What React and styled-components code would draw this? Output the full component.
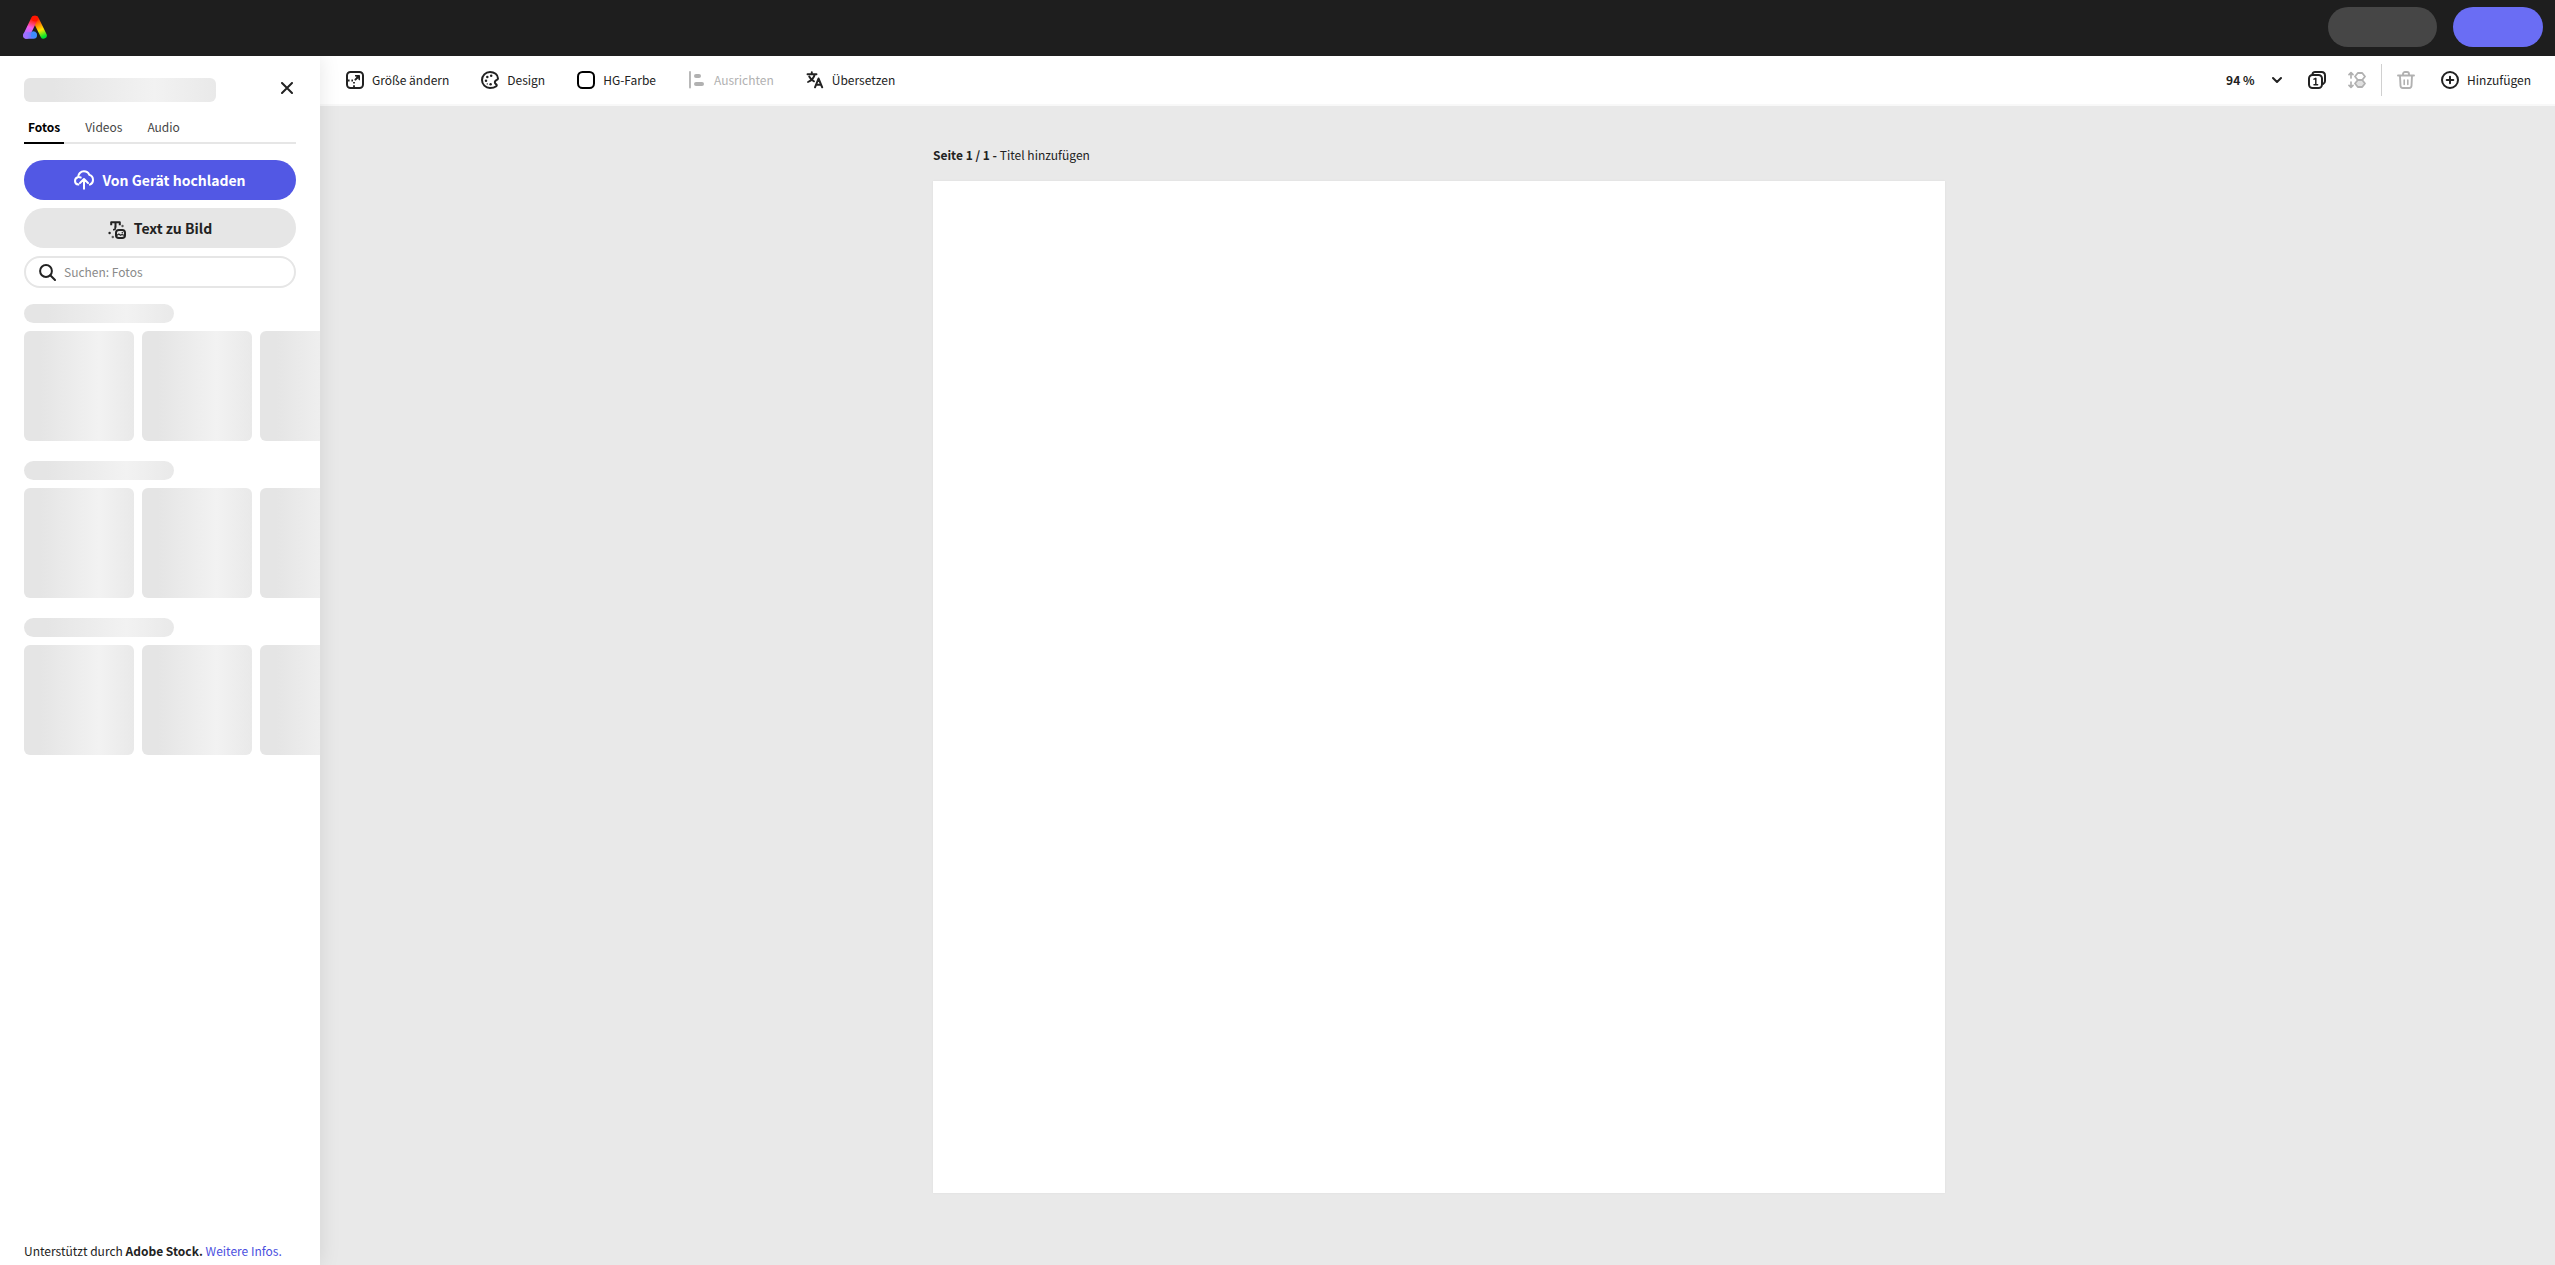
import React, { useState } from "react";
import styled, { createGlobalStyle } from "styled-components";

const GlobalStyle = createGlobalStyle`
  *, *::before, *::after { box-sizing: border-box; }
  body {
    margin: 0;
    background: #e9e9e9;
    color: #222;
    font-family: "Noto Sans CJK SC", "Noto Sans", sans-serif;
    font-size: 12px;
    line-height: 20px;
  }
  button, input, select { font: inherit; color: inherit; }
`;

const Shell = styled.div`
  min-height: 100vh;
  display: flex;
  flex-direction: column;
`;

const Header = styled.header`
  height: 56px;
  flex: none;
  display: flex;
  align-items: center;
  justify-content: space-between;
  padding: 0 12px 2px 23px;
  background: #1e1e1e;
`;

const HeaderActions = styled.div`
  display: flex;
  gap: 16px;
`;

const HeaderPill = styled.button`
  width: ${(p) => (p.$primary ? 90 : 109)}px;
  height: 40px;
  padding: 0;
  border: 0;
  border-radius: 20px;
  background: ${(p) => (p.$primary ? "#6a6df4" : "#464646")};
`;

const Body = styled.div`
  flex: 1;
  display: flex;
`;

const Sidebar = styled.aside`
  position: relative;
  z-index: 1;
  width: 320px;
  flex: none;
  display: flex;
  flex-direction: column;
  padding: 20px 24px 4px;
  background: #fff;
  box-shadow: 0 0 20px rgba(0, 0, 0, 0.1);
  clip-path: inset(0 -24px 0 0);
`;

const PanelHead = styled.div`
  display: flex;
  align-items: center;
  justify-content: space-between;
  height: 28px;
`;

const Skeleton = styled.div`
  flex: none;
  width: ${(p) => p.$w}px;
  height: ${(p) => p.$h}px;
  border-radius: ${(p) => p.$r}px;
  background: linear-gradient(90deg, #e5e5e5 15%, #f2f2f2 68%, #e9e9e9);
`;

const IconButton = styled.button`
  display: flex;
  padding: 0;
  border: 0;
  background: none;
  color: ${(p) => (p.disabled ? "#b1b1b1" : "#222")};
`;

const CloseButton = styled(IconButton)`
  padding: 2px 3px 6px;
`;

const Tabs = styled.div`
  display: flex;
  gap: 17px;
  margin-top: 8px;
  border-bottom: 2px solid #e6e6e6;
`;

const Tab = styled.button`
  height: 32px;
  margin-bottom: -2px;
  padding: 0 4px;
  border: 0;
  border-bottom: 2px solid ${(p) => (p.$active ? "#000" : "transparent")};
  background: none;
  color: ${(p) => (p.$active ? "#000" : "#464646")};
  font-weight: ${(p) => (p.$active ? 700 : 400)};
`;

const PanelActions = styled.div`
  display: flex;
  flex-direction: column;
  gap: 8px;
  margin-top: 16px;
`;

const ActionButton = styled.button`
  display: flex;
  align-items: center;
  justify-content: center;
  gap: 8px;
  height: 40px;
  border: 0;
  border-radius: 20px;
  background: ${(p) => (p.$primary ? "#5258e4" : "#e6e6e6")};
  color: ${(p) => (p.$primary ? "#fff" : "#222")};
  font-size: 14px;
  font-weight: 700;
`;

const SearchBox = styled.label`
  display: flex;
  align-items: center;
  gap: 8px;
  height: 32px;
  padding: 0 13px;
  border: 2px solid #e6e6e6;
  border-radius: 16px;
`;

const SearchInput = styled.input`
  flex: 1;
  min-width: 0;
  padding: 0;
  border: 0;
  outline: 0;
  background: none;
  &::placeholder { color: #8a8a8a; opacity: 1; }
`;

const Shelves = styled.div`
  display: flex;
  flex-direction: column;
  gap: 20px;
  margin: 16px -24px 0 0;
  overflow: hidden;
`;

const Shelf = styled.div`
  display: flex;
  flex-direction: column;
  gap: 8px;
`;

const ShelfRow = styled.div`
  display: flex;
  gap: 8px;
`;

const Credit = styled.p`
  margin: auto 0 0;
  a { color: #4b4fe0; text-decoration: none; }
`;

const Main = styled.main`
  flex: 1;
  min-width: 0;
  display: flex;
  flex-direction: column;
`;

const Toolbar = styled.div`
  flex: none;
  display: flex;
  align-items: center;
  justify-content: space-between;
  height: 50px;
  padding: 0 24px 0 26px;
  background: #fff;
  border-bottom: 2px solid #f8f8f8;
`;

const ToolGroup = styled.div`
  display: flex;
  align-items: center;
  gap: ${(p) => p.$gap}px;
`;

const ToolButton = styled(IconButton)`
  align-items: center;
  gap: 8px;
`;

const ZoomPicker = styled.label`
  display: grid;
  align-items: center;
  width: 56px;
  & > * { grid-area: 1 / 1; }
  & > svg { justify-self: end; pointer-events: none; }
`;

const ZoomSelect = styled.select`
  width: 100%;
  padding: 0;
  border: 0;
  appearance: none;
  background: none;
  font-weight: 700;
`;

const Divider = styled.span`
  width: 1px;
  height: 32px;
  background: #d0d0d0;
`;

const Workspace = styled.section`
  flex: 1;
  display: flex;
  flex-direction: column;
  align-items: center;
  padding: 39px 0 72px 3px;
`;

const PageFrame = styled.div`
  width: calc(100vh - 253px);
`;

const PageTitle = styled.h1`
  margin: 0 0 16px;
  font-size: 12px;
  line-height: 20px;
  font-weight: 400;
`;

const Artboard = styled.div`
  aspect-ratio: 1;
  background: #fff;
  box-shadow: 0 0 2px rgba(0, 0, 0, 0.06);
`;

const Svg = ({ size = 18, box = 18, children }) => (
  <svg
    width={size}
    height={size}
    viewBox={`0 0 ${box} ${box}`}
    fill="none"
    stroke="currentColor"
    strokeWidth="1.8"
    strokeLinecap="round"
    strokeLinejoin="round"
    aria-hidden="true"
  >
    {children}
  </svg>
);

const Logo = () => (
  <svg width="24" height="24" viewBox="0 0 24 24" fill="none" strokeWidth="6.400" strokeLinecap="round" strokeLinejoin="round" aria-label="Adobe Express">
    <defs>
      <linearGradient id="lr" gradientUnits="userSpaceOnUse" x1="12" y1="2" x2="21" y2="23">
        <stop offset="0.1" stopColor="#ff1a00" />
        <stop offset="0.38" stopColor="#ff8a00" />
        <stop offset="0.62" stopColor="#ffe600" />
        <stop offset="0.95" stopColor="#00e52e" />
      </linearGradient>
      <linearGradient id="ll" gradientUnits="userSpaceOnUse" x1="12" y1="2" x2="5" y2="23">
        <stop offset="0.12" stopColor="#ff1200" />
        <stop offset="0.3" stopColor="#ff3c5a" />
        <stop offset="0.52" stopColor="#f35cf0" />
        <stop offset="0.9" stopColor="#9a70ff" />
      </linearGradient>
      <linearGradient id="lb" gradientUnits="userSpaceOnUse" x1="3" y1="20" x2="14" y2="20">
        <stop offset="0" stopColor="#a070ff" />
        <stop offset="0.5" stopColor="#6a7cff" />
        <stop offset="1" stopColor="#2f90ff" />
      </linearGradient>
    </defs>
    <path d="M12.500 4 20.600 20.500" stroke="url(#lr)" />
    <path d="M11.300 4 3.400 20.500" stroke="url(#ll)" />
    <path d="M3.400 20.500H10.600" stroke="url(#lb)" />
    <path d="M8.500 17C9.500 16 11 16.100 12.300 16.800 14.300 18 14.500 21 13 22.500L8 22Z" fill="#3f8cff" />
    <path d="M11.500 3.500h.8" stroke="#ff1600" strokeWidth="5.600" />
  </svg>
);

const CloseIcon = () => <Svg size={12} box={12}><path d="M1 1l10 10M11 1 1 11" strokeWidth="2" /></Svg>;

const UploadIcon = () => (
  <Svg size={20} box={20}>
    <path d="M4.400 14.600C2.400 14.300 1 12.800 1 10.900c0-1.900 1.200-3.300 3-3.700C4.200 3.900 6.700 1.200 9.900 1.200c2.500 0 4.500 1.400 5.300 3.500 2.300.7 3.800 2.700 3.800 5.200 0 2.300-1.200 4-3.100 4.700M5.400 7.200c.5 0 .9.100 1.300.300M10 18.800V10M6 13l4-4 4 4" strokeWidth="2" />
  </Svg>
);

const TextToImageIcon = () => (
  <svg width="18" height="22" viewBox="0 0 18 22" fill="none" stroke="currentColor" strokeLinecap="round" strokeLinejoin="round" aria-hidden="true">
    <g transform="translate(0 4)">
      <path d="M3.200 4.200V1.200h8.600v3M7.500 1.200V6.500" strokeWidth="2" strokeLinecap="butt" />
      <path d="M7.300 6v1c0 1-.6 1.700-1.500 1.700" strokeWidth="1.700" />
      <rect x="8" y="9" width="9" height="8" rx="2.800" strokeWidth="2" />
      <path d="M9 14.300l1.800-1.200 1.700 1.200 1.500-.8 2 .8" strokeWidth="1.200" />
      <g fill="currentColor" stroke="none">
        <circle cx="14.300" cy="11.700" r=".8" />
        <circle cx="14.500" cy="5" r="1.200" fillOpacity=".7" />
        <circle cx="1.600" cy="12" r="1.200" />
        <circle cx="4.800" cy="16" r="1.200" fillOpacity=".7" />
      </g>
    </g>
  </svg>
);

const SearchIcon = () => (
  <Svg size={17} box={17}>
    <circle cx="7" cy="7" r="5.900" strokeWidth="2" />
    <path d="M11.300 11.300 16 16" strokeWidth="2" />
  </Svg>
);

const ResizeIcon = () => (
  <Svg>
    <rect x="1" y="1" width="16" height="16" rx="3.500" strokeWidth="2" />
    <path d="M9.400 4.500h4.100v4.100z" fill="currentColor" strokeWidth="1" />
    <path d="M12.500 5.500 9.400 8.600" strokeWidth="2" />
    <path d="M2 9.500h1.600M5.400 9.500H7M8 11v1.600M8 14.200V16" strokeWidth="1.800" strokeLinecap="butt" />
  </Svg>
);

const PaletteIcon = () => (
  <Svg>
    <path d="M9 1a8 8 0 1 0 0 16c2.200 0 4.600-.5 6.300-1.800.9-.7.400-1.500-.4-2.100-1.400-1-1.400-2.600-.2-3.500.8-.6 2.300-.7 2.300-2.100C17 3.700 13.400 1 9 1Z" strokeWidth="2" />
    <g fill="currentColor" stroke="none">
      <circle cx="6.300" cy="6" r="1.250" />
      <circle cx="10.200" cy="4.700" r="1.250" />
      <circle cx="5" cy="9.800" r="1.250" />
      <circle cx="9.600" cy="13.300" r="1.250" />
      <circle cx="6.300" cy="12.900" r=".7" />
    </g>
  </Svg>
);

const SwatchIcon = () => <Svg><rect x="1" y="1" width="16" height="16" rx="4.500" stroke="#000" strokeWidth="2" /></Svg>;

const AlignIcon = () => (
  <Svg>
    <path d="M2 1v15.500" strokeWidth="1.800" />
    <rect x="6" y="3" width="7" height="4" rx="2" fill="currentColor" stroke="none" />
    <rect x="6" y="11" width="10" height="4" rx="2" fill="currentColor" stroke="none" />
  </Svg>
);

const TranslateIcon = () => (
  <Svg>
    <path d="M1.500 3.300h9M5.800 1.300v2M8.700 3.500C8 6.800 5.500 9.500 2 11M3.200 5.500C4.300 7.700 6 9.300 8 10.300" strokeWidth="1.900" />
    <path d="M9 16.300l3.500-8.800 3.700 8.800M10.300 13.800h4.500" strokeWidth="2" />
  </Svg>
);

const ChevronIcon = () => <Svg size={10} box={10}><path d="M1 3l4 4 4-4" strokeWidth="2" /></Svg>;

const PagesIcon = () => (
  <Svg>
    <path d="M4.500 3C4.800 1.700 5.800 1 7 1h6.500C15.500 1 17 2.500 17 4.500V10c0 1.400-.7 2.500-2 3" strokeWidth="2" />
    <rect x="1" y="4" width="13" height="13" rx="3.500" strokeWidth="2" />
    <path d="M6 8.200l1.800-.9v6.500M6 13.800h3.600" strokeWidth="1.500" />
  </Svg>
);

const OrderIcon = () => (
  <Svg>
    <path d="M3 7V1.800M1 3.600l2-2 2 2M3 11v5.200M1 14.400l2 2 2-2" strokeWidth="1.700" />
    <path d="M9.800 9 7 12.500 9.800 16h4.400l2.800-3.500L14.200 9Z" fill="currentColor" fillOpacity=".4" strokeWidth="1.800" />
    <path d="M9.800 2h4.400L17 5.500 14.200 9H9.800L7 5.500Z" fill="#fff" strokeWidth="1.800" />
  </Svg>
);

const TrashIcon = () => (
  <Svg>
    <path d="M1 4.500h16M6 4.200V3a2 2 0 0 1 2-2h2a2 2 0 0 1 2 2v1.200M3 5l.5 9.800A2.300 2.300 0 0 0 5.800 17h6.400a2.300 2.300 0 0 0 2.300-2.200L15 5" strokeWidth="1.900" />
    <path d="M7.200 9v4.500M10.800 9v4.500" strokeWidth="1.600" />
  </Svg>
);

const AddIcon = () => (
  <Svg>
    <circle cx="9" cy="9" r="8" strokeWidth="2" />
    <path d="M9 5.700v6.600M5.700 9h6.600" strokeWidth="2" />
  </Svg>
);

const TABS = ["Fotos", "Videos", "Audio"];

const TOOLS = [
  { label: "Größe ändern", Icon: ResizeIcon },
  { label: "Design", Icon: PaletteIcon },
  { label: "HG-Farbe", Icon: SwatchIcon },
  { label: "Ausrichten", Icon: AlignIcon, disabled: true },
  { label: "Übersetzen", Icon: TranslateIcon },
];

export default function App() {
  const [tab, setTab] = useState("Fotos");

  return (
    <Shell>
      <GlobalStyle />
      <Header>
        <Logo />
        <HeaderActions>
          <HeaderPill type="button" />
          <HeaderPill type="button" $primary />
        </HeaderActions>
      </Header>
      <Body>
        <Sidebar>
          <PanelHead>
            <Skeleton $w={192} $h={24} $r={6} />
            <CloseButton type="button"><CloseIcon /></CloseButton>
          </PanelHead>
          <Tabs role="tablist">
            {TABS.map((name) => (
              <Tab key={name} type="button" role="tab" aria-selected={tab === name} $active={tab === name} onClick={() => setTab(name)}>
                {name}
              </Tab>
            ))}
          </Tabs>
          <PanelActions>
            <ActionButton type="button" $primary><UploadIcon />Von Gerät hochladen</ActionButton>
            <ActionButton type="button"><TextToImageIcon />Text zu Bild</ActionButton>
            <SearchBox>
              <SearchIcon />
              <SearchInput type="search" placeholder="Suchen: Fotos" />
            </SearchBox>
          </PanelActions>
          <Shelves>
            {[0, 1, 2].map((shelf) => (
              <Shelf key={shelf}>
                <Skeleton $w={150} $h={19} $r={10} />
                <ShelfRow>
                  {[0, 1, 2].map((card) => <Skeleton key={card} $w={110} $h={110} $r={6} />)}
                </ShelfRow>
              </Shelf>
            ))}
          </Shelves>
          <Credit>
            Unterstützt durch <b>Adobe Stock.</b> <a href="#stock">Weitere Infos.</a>
          </Credit>
        </Sidebar>
        <Main>
          <Toolbar>
            <ToolGroup $gap={32}>
              {TOOLS.map(({ label, Icon, disabled }) => (
                <ToolButton key={label} type="button" disabled={disabled}><Icon />{label}</ToolButton>
              ))}
            </ToolGroup>
            <ToolGroup $gap={26}>
              <ZoomPicker>
                <ZoomSelect defaultValue="94"><option value="94">94 %</option></ZoomSelect>
                <ChevronIcon />
              </ZoomPicker>
              <ToolGroup $gap={15}>
                <ToolGroup $gap={22}>
                  <IconButton type="button"><PagesIcon /></IconButton>
                  <IconButton type="button" disabled><OrderIcon /></IconButton>
                </ToolGroup>
                <Divider />
                <IconButton type="button" disabled><TrashIcon /></IconButton>
              </ToolGroup>
              <ToolButton type="button"><AddIcon />Hinzufügen</ToolButton>
            </ToolGroup>
          </Toolbar>
          <Workspace>
            <PageFrame>
              <PageTitle><b>Seite 1 / 1 - </b>Titel hinzufügen</PageTitle>
              <Artboard />
            </PageFrame>
          </Workspace>
        </Main>
      </Body>
    </Shell>
  );
}
